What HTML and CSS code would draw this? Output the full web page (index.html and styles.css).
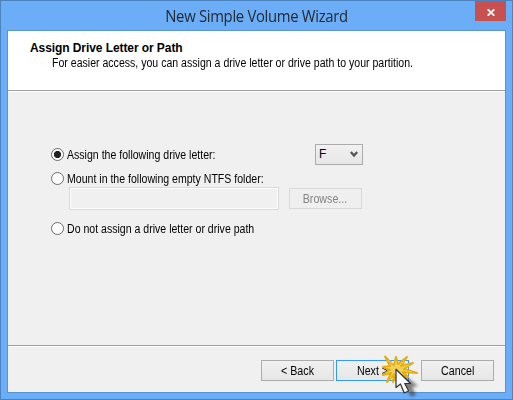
FILE: index.html
```html
<!DOCTYPE html>
<html lang="en">
<head>
<meta charset="utf-8">
<title>New Simple Volume Wizard</title>
<link rel="stylesheet" href="styles.css">
</head>
<body>
<div class="window">
  <header class="titlebar">
    <h1>New Simple Volume Wizard</h1>
    <button class="close" aria-label="Close"><svg width="8" height="7" viewBox="0 0 8 7"><path d="M0.7 0.3L7.3 6.7M7.3 0.3L0.7 6.7" stroke="#fff" stroke-width="1.8"/></svg></button>
  </header>
  <main class="client">
    <section class="heading">
      <h2>Assign Drive Letter or Path</h2>
      <p>For easier access, you can assign a drive letter or drive path to your partition.</p>
    </section>
    <section class="options">
      <div class="row letter-row">
        <span class="radio checked"></span><span class="label">Assign the following drive letter:</span>
        <div class="select"><span>F</span><svg width="8" height="7" viewBox="0 0 8 7"><path d="M0.8 1L4 4.5L7.2 1" fill="none" stroke="#555" stroke-width="2.3"/></svg></div>
      </div>
      <div class="row mount-row"><span class="radio"></span><span class="label">Mount in the following empty NTFS folder:</span></div>
      <div class="folder-row"><div class="field"></div><button class="btn disabled"><span>Browse...</span></button></div>
      <div class="row none-row"><span class="radio"></span><span class="label">Do not assign a drive letter or drive path</span></div>
    </section>
    <footer class="actions">
      <button class="btn"><span>&lt; Back</span></button>
      <button class="btn primary"><span>Next &gt;</span></button>
      <button class="btn cancel"><span>Cancel</span></button>
    </footer>
  </main>
  <svg class="pointer" width="42" height="47" viewBox="0 0 42 47">
    <defs><filter id="shadow" x="-50%" y="-50%" width="200%" height="200%"><feGaussianBlur stdDeviation="1.8"/></filter></defs>
    <path d="M17 18L17 35L21 33L25 41L30 39L26 31L32 30Z" transform="translate(4 3)" fill="#333" opacity=".6" filter="url(#shadow)"/>
    <path d="M11 12L3 3.500L8 13L1 14L8 17L0.500 22L9 20L5 29L12 21L11 29L15 21L26 24L21 19L35 20L22 16L31 10L19 13L25 4L16 11L14 4L12 12Z" fill="#edd06a" stroke="#e8ad0c" stroke-width="2" stroke-linejoin="round"/>
    <path d="M14 16L6 7M14 16L14 8M14 16L22 8M14 16L27 12M14 16L30 19M14 16L4 20M14 16L8 25M14 16L4 14.500" stroke="#f2d04a"/>
    <path d="M14 16.300V34.500L18.500 31L22.200 40L26.700 38L22.700 30.500H28.500Z" fill="#fafafa" stroke="#333" stroke-width="1.2" stroke-linejoin="round"/>
  </svg>
</div>
</body>
</html>
```
FILE: styles.css
```css
* { box-sizing: border-box; }
body { margin: 0; font: 12px/14px "Liberation Sans", Arial, sans-serif; color: #000; }
h1, h2, p { margin: 0; font-weight: normal; white-space: nowrap; }
.window { position: relative; width: 513px; height: 400px; overflow: hidden; background: #6badf6; border: 1px solid #4a83bd; padding: 0 6px 6px; display: flex; flex-direction: column; }
.titlebar { height: 29px; display: grid; grid-template-columns: 31px 1fr 31px; }
.titlebar h1 { grid-column: 2; font: 16px/30px "Open Sans", sans-serif; color: #222a33; text-align: center; letter-spacing: -0.35px; transform: scaleX(.93); }
.close { width: 31px; height: 20px; padding: 2px 0 0; border: 0; background: #c75050; display: flex; align-items: center; justify-content: center; }
.client { flex: 1; border: 1px solid #5a94d0; background: #f0f0f0; display: flex; flex-direction: column; }
.heading { height: 60px; background: #fff; border-bottom: 1px solid #a0a0a0; padding: 10px 0 0 22px; box-shadow: 0 1px #fff; }
.heading h2 { font-size: 12px; font-weight: bold; line-height: 15px; letter-spacing: -0.08px; }
.heading p { margin-left: 22px; line-height: 15px; }
.heading p, .label { transform: scaleX(.88); transform-origin: left; }
.label { padding-top: 2px; }
.options { height: 254px; padding: 52px 0 0 43px; }
.row { display: flex; align-items: center; height: 22px; white-space: nowrap; }
.radio { width: 13px; height: 13px; border: 1px solid #6b6b6b; border-radius: 50%; background: #fff; margin-right: 3px; flex: none; }
.checked { background: radial-gradient(circle, #222 0 3.2px, #fff 4px); }
.select { width: 48px; height: 21px; border: 1px solid #acacac; background: linear-gradient(#f1f1f1, #e6e6e6); margin-left: auto; margin-right: 142px; display: flex; justify-content: space-between; align-items: center; padding: 0 4px 0 3px; }
.mount-row { margin-top: 2px; }
.folder-row { display: flex; align-items: center; margin: -2px 0 0 18px; gap: 10px; height: 23px; }
.field { width: 210px; height: 23px; border: 1px solid #d9d9d9; box-shadow: inset 0 0 0 1px #fff; }
.none-row { margin-top: 7px; }
.btn { width: 73px; height: 21px; padding: 0; border: 1px solid #acacac; background: linear-gradient(#f1f1f1, #e6e6e6); font: inherit; color: #000; }
.btn span { display: inline-block; transform: scaleX(.89); }
.disabled { border-color: #d9d9d9; background: #efefef; color: #838383; }
.actions { flex: 1; border-top: 1px solid #a0a0a0; box-shadow: inset 0 1px #fff; padding: 14px 11px 0; display: flex; justify-content: flex-end; gap: 2px; }
.primary { border-color: #3399ff; }
.cancel { margin-left: 10px; }
.pointer { position: absolute; left: 381px; top: 352px; }
```
